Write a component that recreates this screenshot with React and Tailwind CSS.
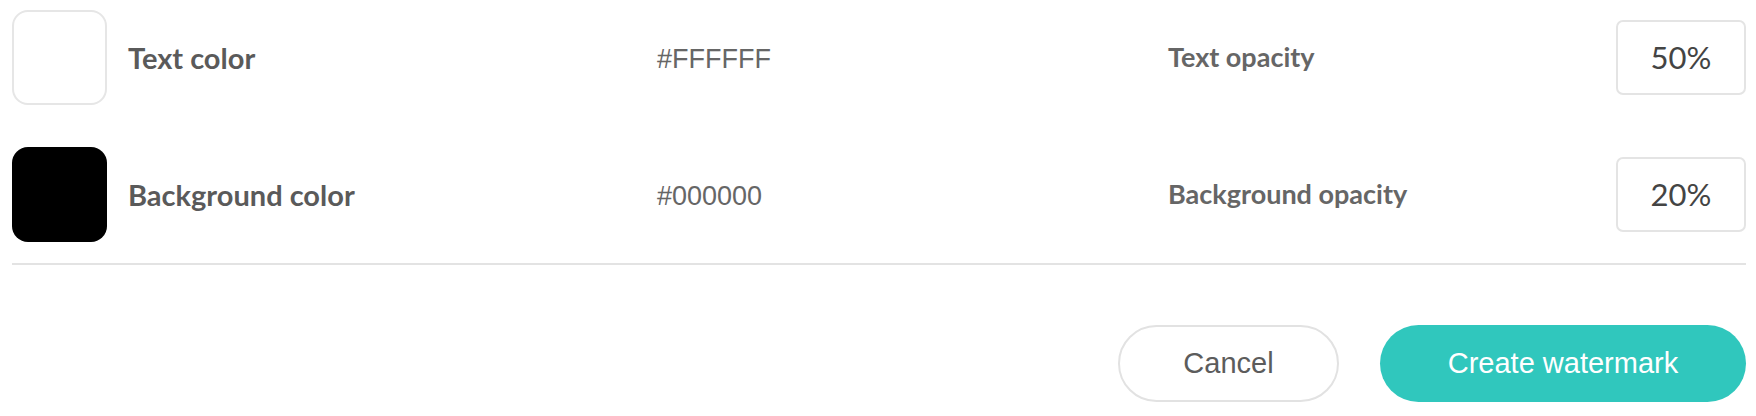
const rows = [
    { label: 'Text color', hex: '#FFFFFF', swatch: 'bg-white border-2 border-[#e6e6e6]', opLabel: 'Text opacity', value: '50%' },
    { label: 'Background color', hex: '#000000', swatch: 'bg-black', opLabel: 'Background opacity', value: '20%' },
];

export default function App() {
    return (
        <div className="w-[1756px] h-[416px] bg-white pl-[12px] pr-[10px] pt-[10px] font-['Lato',sans-serif]">
            <div className="flex flex-col gap-[42px]">
                {rows.map(row => (
                    <div key={row.label} className="flex items-center h-[95px]">
                        <div className={`w-[95px] h-[95px] rounded-[16px] shrink-0 ${row.swatch}`} />
                        <div className="w-[550px] pl-[21px] text-[29px] font-bold text-[#5a5a5a]">{row.label}</div>
                        <div className="w-[511px] pt-[3px] text-[27px] text-[#666] font-['Liberation_Sans',Arial,sans-serif]">{row.hex}</div>
                        <div className="flex-1 text-[27px] font-bold text-[#666]">{row.opLabel}</div>
                        <div className="w-[130px] h-[75px] rounded-[7px] border-2 border-[#e4e4e4] flex items-center justify-center text-[31px] text-[#444]">
                            {row.value}
                        </div>
                    </div>
                ))}
            </div>
            <div className="mt-[21px] h-[2px] bg-[#e3e3e3]" />
            <div className="flex justify-end gap-[41px] mt-[60px] font-['Liberation_Sans',Arial,sans-serif] text-[29px]">
                <button className="w-[221px] h-[77px] rounded-full border-2 border-[#e2e2e2] bg-white text-[#5c5c5c]">
                    Cancel
                </button>
                <button className="w-[366px] h-[77px] rounded-full bg-[#30c7bd] text-white">
                    Create watermark
                </button>
            </div>
        </div>
    );
}
